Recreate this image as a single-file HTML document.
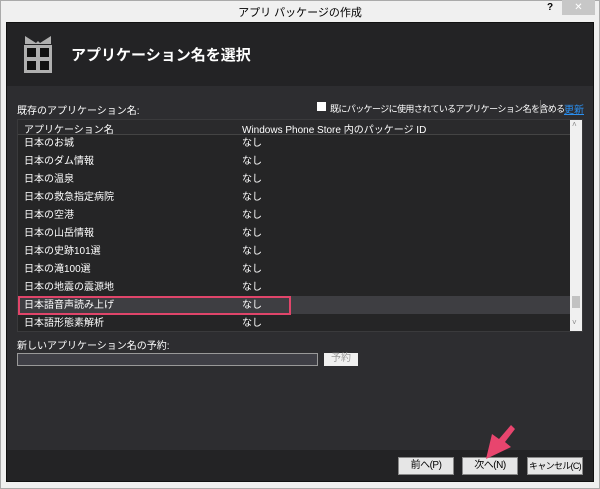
<!DOCTYPE html><html><head><meta charset="utf-8"><style>
*{margin:0;padding:0;box-sizing:border-box}
body{width:600px;height:489px;background:#f0f0f0;font-family:"Liberation Sans","Noto Sans CJK JP",sans-serif;position:relative;overflow:hidden;font-size:10px;color:#fff}
.a{position:absolute}
.t{white-space:nowrap}
.row{position:absolute;left:18px;width:552px;height:18px;line-height:18px}
.row span{position:absolute;left:6px;top:1px}
.row b{position:absolute;left:224px;top:1px;font-weight:normal}
.btn{position:absolute;top:457px;height:18px;background:#e6e6e6;border:1px solid #888;color:#000;text-align:center;line-height:16px;font-size:10px;white-space:nowrap;letter-spacing:-0.5px;overflow:hidden}
</style></head><body>
<div class="a" style="left:0;top:0;width:600px;height:489px;border:1px solid #aaa"></div>
<div class="a t" style="left:0;width:600px;top:4px;text-align:center;color:#000;font-size:11px">アプリ パッケージの作成</div>
<div class="a" style="left:547px;top:2px;color:#000;font-weight:bold;font-size:10px">?</div>
<div class="a" style="left:562px;top:0;width:33px;height:15px;background:#c7c7c7;color:#fff;text-align:center;font-size:10px;line-height:15px">✕</div>
<div class="a" style="left:6px;top:22px;width:588px;height:460px;background:#2d2d30;border:1px solid #111"></div>
<div class="a" style="left:7px;top:23px;width:586px;height:63px;background:#232325"></div>
<svg class="a" style="left:22px;top:35px" width="32" height="40" viewBox="0 0 32 40"><path d="M3 1 L14 8 L16 6 L18 8 L29 1 L29 9 L3 9Z" fill="#b0b0b0"/><rect x="2" y="10" width="28" height="28" fill="#b0b0b0"/><rect x="5" y="13" width="9" height="9" fill="#111"/><rect x="18" y="13" width="9" height="9" fill="#111"/><rect x="5" y="26" width="9" height="9" fill="#111"/><rect x="18" y="26" width="9" height="9" fill="#111"/></svg>
<div class="a t" style="left:71px;top:44px;font-size:15px;font-weight:bold">アプリケーション名を選択</div>
<div class="a t" style="left:17px;top:102px">既存のアプリケーション名:</div>
<div class="a" style="left:317px;top:102px;width:9px;height:9px;background:#fff"></div>
<div class="a t" style="left:330px;top:102px;font-size:9px;letter-spacing:-0.6px">既にパッケージに使用されているアプリケーション名を含める</div>
<div class="a" style="left:540px;top:100px;width:1px;height:14px;background:#666"></div>
<div class="a t" style="left:564px;top:101px;color:#2a8ff0;text-decoration:underline">更新</div>
<div class="a" style="left:17px;top:119px;width:566px;height:213px;background:#252526;border:1px solid #3a3a3c"></div>
<div class="a" style="left:18px;top:120px;width:552px;height:15px;background:#2a2a2c;border-bottom:1px solid #444"></div>
<div class="a t" style="left:24px;top:121px">アプリケーション名</div>
<div class="a t" style="left:242px;top:121px">Windows Phone Store 内のパッケージ ID</div>
<div class="a" style="left:570px;top:120px;width:12px;height:211px;background:#f0f0f0"></div>
<div class="a" style="left:572px;top:296px;width:8px;height:12px;background:#c2c2c2"></div>
<div class="a" style="left:572px;top:120px;font-size:8px;color:#888">˄</div>
<div class="a" style="left:572px;top:318px;font-size:8px;color:#888">˅</div>
<div class="row" style="top:134px"><span>日本のお城</span><b>なし</b></div>
<div class="row" style="top:152px"><span>日本のダム情報</span><b>なし</b></div>
<div class="row" style="top:170px"><span>日本の温泉</span><b>なし</b></div>
<div class="row" style="top:188px"><span>日本の救急指定病院</span><b>なし</b></div>
<div class="row" style="top:206px"><span>日本の空港</span><b>なし</b></div>
<div class="row" style="top:224px"><span>日本の山岳情報</span><b>なし</b></div>
<div class="row" style="top:242px"><span>日本の史跡101選</span><b>なし</b></div>
<div class="row" style="top:260px"><span>日本の滝100選</span><b>なし</b></div>
<div class="row" style="top:278px"><span>日本の地震の震源地</span><b>なし</b></div>
<div class="row" style="top:296px;background:#3e3e42"><span>日本語音声読み上げ</span><b>なし</b></div>
<div class="a" style="left:18px;top:296px;width:273px;height:19px;border:2px solid #e0456a"></div>
<div class="row" style="top:314px;height:17px;overflow:hidden"><span>日本語形態素解析</span><b>なし</b></div>
<div class="a t" style="left:17px;top:337px">新しいアプリケーション名の予約:</div>
<div class="a" style="left:17px;top:353px;width:301px;height:13px;background:#3f3f46;border:1px solid #999"></div>
<div class="a" style="left:324px;top:353px;width:34px;height:13px;background:#f0f0f0;color:#999;text-align:center;line-height:12px">予約</div>
<div class="a" style="left:7px;top:450px;width:586px;height:31px;background:#232325"></div>
<div class="btn" style="left:398px;width:56px">前へ(P)</div>
<div class="btn" style="left:462px;width:56px">次へ(N)</div>
<div class="btn" style="left:527px;width:56px;font-size:9px;letter-spacing:-0.7px">キャンセル(C)</div>
<svg class="a" style="left:478px;top:422px" width="40" height="40"><path d="M33 3 L37 7 L27 20 L33 25 L8 37 L14 12 L21 17Z" fill="#e8456e"/></svg>
</body></html>
